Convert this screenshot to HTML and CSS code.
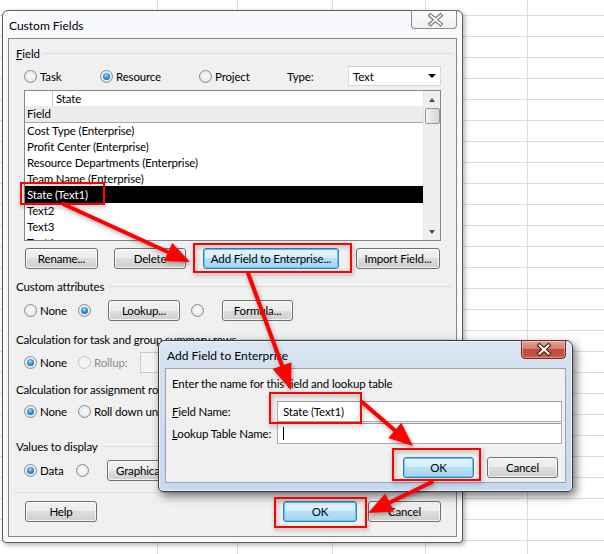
FILE: index.html
```html
<!DOCTYPE html>
<html>
<head>
<meta charset="utf-8">
<title>Custom Fields</title>
<link rel="stylesheet" href="styles.css">
</head>
<body>
<div class="desktop">

  <div class="win win-main">
    <div class="titlebar">
      <span class="title">Custom Fields</span>
      <div class="close close-plain">
        <svg width="46" height="19" viewBox="0 0 46 19">
          <path d="M19.5 5.5 L29.5 14 M29.5 5.5 L19.5 14" stroke="#6e6e6e" stroke-width="4" stroke-linecap="square" fill="none"/>
          <path d="M19.5 5.5 L29.5 14 M29.5 5.5 L19.5 14" stroke="#ffffff" stroke-width="1.8" stroke-linecap="square" fill="none"/>
        </svg>
      </div>
    </div>
    <div class="client main-client">
      <div class="legend"><span><u>F</u>ield</span></div>
      <div class="row row-type">
        <div class="opt w-task"><span class="radio"></span>Task</div>
        <div class="opt w-res"><span class="radio on"></span>Resource</div>
        <div class="opt w-proj"><span class="radio"></span>Project</div>
        <span class="type-label">Type:</span>
        <div class="combo">Text<span class="tri-down"></span></div>
      </div>
      <div class="listbox">
        <div class="list-main">
          <div class="edit-row"><span class="edit-cell"></span><span class="edit-text">State</span></div>
          <div class="hdr-row">Field</div>
          <div class="item">Cost Type (Enterprise)</div>
          <div class="item">Profit Center (Enterprise)</div>
          <div class="item">Resource Departments (Enterprise)</div>
          <div class="item">Team Name (Enterprise)</div>
          <div class="item sel">State (Text1)</div>
          <div class="item">Text2</div>
          <div class="item">Text3</div>
          <div class="item">Text4</div>
        </div>
        <div class="vscroll">
          <div class="sb-btn"><span class="tri-up-s"></span></div>
          <div class="sb-thumb"></div>
          <div class="sb-track"></div>
          <div class="sb-btn"><span class="tri-down-s"></span></div>
        </div>
      </div>
      <div class="btn-row">
        <div class="btn b-rename">Rename...</div>
        <div class="btn b-delete">Delete</div>
        <div class="btn def b-add">Add Field to Enterprise...</div>
        <div class="btn b-import">Import Field...</div>
      </div>

      <div class="legend lg-custom"><span>Custom attributes</span></div>
      <div class="row row-attr">
        <div class="opt w-none"><span class="radio"></span>None</div>
        <div class="opt w-r2"><span class="radio on"></span></div>
        <div class="btn b-lookup">Lookup...</div>
        <div class="opt w-r3"><span class="radio"></span></div>
        <div class="btn b-formula">Formula...</div>
      </div>

      <div class="legend lg-task"><span>Calculation for task and group summary rows</span></div>
      <div class="row row-rollup">
        <div class="opt w-none"><span class="radio on"></span>None</div>
        <div class="opt w-rollup dis"><span class="radio dis"></span>Rollup:</div>
        <div class="combo combo-dis"></div>
      </div>

      <div class="legend lg-assign"><span>Calculation for assignment rows</span></div>
      <div class="row row-assign">
        <div class="opt w-none"><span class="radio on"></span>None</div>
        <div class="opt"><span class="radio"></span>Roll down unless manually entered</div>
      </div>

      <div class="legend lg-values"><span>Values to display</span></div>
      <div class="row row-values">
        <div class="opt w-data"><span class="radio on"></span>Data</div>
        <div class="opt w-r2b"><span class="radio"></span></div>
        <div class="btn b-graph">Graphical...</div>
      </div>

      <div class="sep"></div>

      <div class="btn-row bottom-row">
        <div class="btn b-help">Help</div>
        <div class="btn def b-ok">OK</div>
        <div class="btn b-cancel">Cancel</div>
      </div>
    </div>
  </div>

  <div class="win win-sub">
    <div class="titlebar sub-title">
      <span class="title">Add Field to Enterprise</span>
      <div class="close close-red">
        <svg width="45" height="19" viewBox="0 0 45 19">
          <path d="M18.5 5.5 L27.5 13.5 M27.5 5.5 L18.5 13.5" stroke="#4a1a14" stroke-width="4.2" stroke-linecap="square" fill="none"/>
          <path d="M18.5 5.5 L27.5 13.5 M27.5 5.5 L18.5 13.5" stroke="#ffffff" stroke-width="2" stroke-linecap="square" fill="none"/>
        </svg>
      </div>
    </div>
    <div class="client sub-client">
      <div class="sub-line">Enter the name for this field and lookup table</div>
      <div class="field-row fr-1">
        <span class="f-label"><u>F</u>ield Name:</span>
        <div class="textbox">State (Text1)</div>
      </div>
      <div class="field-row fr-2">
        <span class="f-label"><u>L</u>ookup Table Name:</span>
        <div class="textbox"><span class="caret"></span></div>
      </div>
      <div class="sub-btns">
        <div class="btn def b-ok2">OK</div>
        <div class="btn b-cancel2">Cancel</div>
      </div>
    </div>
  </div>

  <svg class="annot" width="604" height="554" viewBox="0 0 604 554">
    <g fill="none" stroke="#f00" stroke-width="2">
      <rect x="21" y="183" width="83" height="21"/>
      <rect x="194" y="244" width="157" height="28"/>
      <rect x="270" y="393" width="91" height="30"/>
      <rect x="393" y="449" width="87" height="31"/>
      <rect x="275" y="498" width="91" height="29"/>
    </g>
    <g stroke="#f00" stroke-width="4" stroke-linecap="round" fill="#f00">
      <line x1="63" y1="204" x2="181" y2="258"/>
      <polygon stroke="none" points="190,262 164,261 172.3,242.9"/>
      <line x1="248" y1="273" x2="287.6" y2="380.6"/>
      <polygon stroke="none" points="291,390 272.6,369.1 291.4,362.2"/>
      <line x1="362" y1="402" x2="405.4" y2="439.5"/>
      <polygon stroke="none" points="413,446 388.3,437.9 401.3,422.7"/>
      <line x1="432" y1="482" x2="377" y2="508.6"/>
      <polygon stroke="none" points="368,513 385.2,493.5 394,511.5"/>
    </g>
  </svg>
</div>
</body>
</html>
```

FILE: styles.css
```css
* { box-sizing: border-box; }
html, body { margin: 0; padding: 0; }
body {
  width: 604px;
  height: 554px;
  overflow: hidden;
  font-family: Lato, "Liberation Sans", sans-serif;
  font-size: 11.5px;
  letter-spacing: -0.15px;
  color: #000;
}

.desktop {
  position: relative;
  width: 604px;
  height: 554px;
  background-color: #fff;
  background-image:
    linear-gradient(to right,
      transparent 157px, #dadcdd 157px, #dadcdd 158px, transparent 158px,
      transparent 237px, #dadcdd 237px, #dadcdd 238px, transparent 238px,
      transparent 332px, #dadcdd 332px, #dadcdd 333px, transparent 333px,
      transparent 425px, #dadcdd 425px, #dadcdd 426px, transparent 426px,
      transparent 527px, #dadcdd 527px, #dadcdd 528px, transparent 528px),
    repeating-linear-gradient(to bottom,
      transparent 0, transparent 15px, #dadcdd 15px, #dadcdd 16px,
      transparent 16px, transparent 21px);
}

/* windows */
.win {
  position: absolute;
  display: flex;
  flex-direction: column;
}
.win-main {
  left: 2px;
  top: 10px;
  width: 461px;
  height: 533px;
  border: 1px solid #595959;
  border-radius: 6px 6px 4px 4px;
  background: #f7f9fc;
  padding: 0 5px 5px 5px;
  box-shadow: 2px 2px 5px rgba(0,0,0,0.3), inset 0 0 0 1px #ffffff;
}
.titlebar {
  position: relative;
  height: 27px;
  flex: none;
  display: flex;
  align-items: center;
  padding-left: 1px;
}
.title {
  font-size: 12px;
  letter-spacing: 0;
  padding-top: 1px;
}
.close {
  position: absolute;
  top: -1px;
  right: 0;
  height: 19px;
  border-radius: 0 0 4px 4px;
}
.close svg { display: block; }
.close-plain {
  width: 46px;
  border: 1px solid #8d8d8d;
  border-top-color: #6d6d6d;
  background: linear-gradient(#fbfbfb, #eef0f2);
}
.close-plain svg { margin: -1px 0 0 -1px; }

.client {
  flex: none;
  border: 1px solid #868686;
  background: #f0f0f0;
}
.main-client {
  height: 499px;
  padding: 6px 4px 0 7px;
}

/* group legend */
.legend {
  display: flex;
  align-items: center;
  height: 16px;
  white-space: nowrap;
}
.legend::after {
  content: "";
  flex: 1;
  height: 1px;
  background: #d5dfe5;
  margin-left: 4px;
}
.lg-custom { margin-top: 9px; }
.lg-task { margin-top: 10px; }
.lg-assign { margin-top: 8px; }
.lg-values { margin-top: 17px; }

/* rows */
.row {
  display: flex;
  align-items: center;
  padding-left: 8px;
  white-space: nowrap;
}
.row-type { margin-top: 5px; height: 20px; }
.row-attr { margin-top: 6px; height: 21px; }
.row-rollup { margin-top: 5px; height: 21px; }
.row-assign { margin-top: 4px; height: 20px; }
.row-values { margin-top: 6px; height: 21px; }

.opt {
  display: flex;
  align-items: center;
  flex: none;
}
.opt.dis { color: #8d8d8d; }
.w-task { width: 76px; }
.w-res { width: 99px; }
.w-proj { width: 88px; }
.w-none { width: 54px; }
.w-r2 { width: 30px; }
.w-r3 { width: 13px; margin-left: 11px; margin-right: 18px; }
.w-rollup { width: 62px; }
.w-data { width: 52px; }
.w-r2b { width: 13px; margin-right: 18px; }

.type-label { width: 61px; flex: none; }

.radio {
  position: relative;
  flex: none;
  width: 13px;
  height: 13px;
  border-radius: 50%;
  border: 1px solid #8b8c8c;
  background: radial-gradient(circle at 50% 45%, #fbfbfb 0, #ececec 55%, #cfcfcf 100%);
  margin-right: 3px;
}
.radio.on::after {
  content: "";
  position: absolute;
  left: 2px;
  top: 2px;
  width: 7px;
  height: 7px;
  border-radius: 50%;
  background: radial-gradient(circle at 45% 35%, #a6ddfa 0, #2f93d8 45%, #0b4f8a 100%);
}
.radio.dis {
  border-color: #c4c4c4;
  background: #f4f4f4;
}

/* combo */
.combo {
  flex: none;
  width: 93px;
  height: 20px;
  background: #fff;
  border: 1px solid #d8d8d8;
  border-top-color: #c8c8c8;
  display: flex;
  align-items: center;
  justify-content: space-between;
  padding: 0 4px 0 4px;
}
.tri-down {
  width: 0;
  height: 0;
  border-left: 4px solid transparent;
  border-right: 4px solid transparent;
  border-top: 4px solid #000;
}
.combo-dis {
  width: 160px;
  height: 21px;
  margin-left: 0;
  background: #f4f4f4;
  border-color: #c9c9c9;
}

/* list box */
.listbox {
  display: flex;
  margin: 4px 0 0 8px;
  width: 417px;
  height: 151px;
  border: 1px solid #828790;
  background: #fff;
  overflow: hidden;
}
.list-main {
  flex: 1;
  overflow: hidden;
}
.edit-row {
  display: flex;
  height: 15px;
  align-items: center;
}
.edit-cell {
  width: 28px;
  height: 15px;
  border-right: 1px solid #c8c8c8;
}
.edit-text { padding-left: 3px; }
.hdr-row {
  height: 17px;
  line-height: 16px;
  padding-left: 2px;
  background: #ececec;
  border-bottom: 1px solid #a8a8a8;
}
.item {
  height: 16px;
  line-height: 16px;
  padding-left: 2px;
  white-space: nowrap;
}
.item.sel {
  background: #000;
  color: #fff;
  box-shadow: 0 -1px 0 #000;
}
.vscroll {
  width: 17px;
  flex: none;
  display: flex;
  flex-direction: column;
  align-items: center;
  background: #efefef;
  border-left: 1px solid #e6e6e6;
}
.sb-btn {
  height: 17px;
  width: 100%;
  display: flex;
  align-items: center;
  justify-content: center;
}
.tri-up-s {
  width: 0; height: 0;
  border-left: 3px solid transparent;
  border-right: 3px solid transparent;
  border-bottom: 4px solid #4f4f4f;
}
.tri-down-s {
  width: 0; height: 0;
  border-left: 3px solid transparent;
  border-right: 3px solid transparent;
  border-top: 4px solid #4f4f4f;
}
.sb-thumb {
  width: 15px;
  height: 16px;
  border: 1px solid #979797;
  border-radius: 2px;
  background: linear-gradient(to right, #f5f5f5, #e2e2e2 50%, #d6d6d6);
}
.sb-track { flex: 1; }

/* buttons */
.btn {
  flex: none;
  height: 21px;
  border: 1px solid #707070;
  border-radius: 3px;
  background: linear-gradient(#f2f2f2 0%, #ebebeb 50%, #dddddd 50%, #cfcfcf 100%);
  box-shadow: inset 0 0 0 1px rgba(255,255,255,0.75);
  display: flex;
  align-items: center;
  justify-content: center;
  white-space: nowrap;
}
.btn.def {
  border-color: #3c7fb1;
  background: linear-gradient(#e5f4fc 0%, #d5eefb 50%, #b6e0f8 50%, #a3d6f4 100%);
  box-shadow: inset 0 0 0 1px #5fc8f4;
}
.btn-row {
  display: flex;
  align-items: center;
  height: 21px;
  margin-top: 7px;
  padding-left: 9px;
}
.b-rename { width: 73px; }
.b-delete { width: 72px; margin-left: 16px; }
.b-add { width: 136px; margin-left: 17px; }
.b-import { width: 84px; margin-left: 17px; }
.b-lookup { width: 72px; }
.b-formula { width: 71px; }
.b-graph { width: 72px; }

.sep {
  margin: 11px 0 0 -1px;
  height: 1px;
  background: #d5dfe5;
}
.bottom-row { margin-top: 8px; }
.b-help { width: 72px; }
.b-ok { width: 74px; margin-left: 186px; }
.b-cancel { width: 73px; margin-left: 11px; }

/* second dialog */
.win-sub {
  left: 158px;
  top: 340px;
  width: 415px;
  height: 152px;
  border: 1px solid #3b3b3b;
  border-radius: 7px 7px 5px 5px;
  padding: 0 6px 8px 6px;
  background: linear-gradient(to bottom, #dce7f2 0, #d2e0ef 28px, #c6d9ee 100%);
  box-shadow: 3px 4px 10px rgba(0,0,0,0.55), inset 0 0 0 1px rgba(255,255,255,0.6);
}
.sub-title { padding-left: 2px; }
.close-red {
  width: 45px;
  border: 1px solid #6f2a22;
  background: linear-gradient(#e4a398 0%, #d57d70 45%, #c24b3b 50%, #c85a48 100%);
  box-shadow: inset 0 0 0 1px rgba(255,255,255,0.35);
}
.close-red svg { margin: -1px 0 0 -1px; }

.sub-client {
  height: 115px;
  border-color: #9aa3ad;
  padding: 7px 4px 0 6px;
}
.sub-line {
  height: 16px;
  line-height: 16px;
  white-space: nowrap;
}
.field-row {
  display: flex;
  align-items: center;
  height: 21px;
}
.fr-1 { margin-top: 9px; }
.fr-2 { margin-top: 1px; }
.f-label { width: 105px; flex: none; white-space: nowrap; }
.textbox {
  flex: none;
  width: 285px;
  height: 21px;
  background: #fff;
  border: 1px solid #abadb3;
  border-top-color: #9a9da5;
  display: flex;
  align-items: center;
  padding-left: 5px;
}
.caret {
  width: 1px;
  height: 13px;
  background: #000;
}
.sub-btns {
  display: flex;
  justify-content: flex-end;
  margin-top: 13px;
  padding-right: 3px;
}
.b-ok2 { width: 71px; }
.b-cancel2 { width: 71px; margin-left: 13px; }

/* annotations overlay */
.annot {
  position: absolute;
  left: 0;
  top: 0;
  pointer-events: none;
  filter: drop-shadow(1px 2px 2px rgba(0,0,0,0.35));
}
```
